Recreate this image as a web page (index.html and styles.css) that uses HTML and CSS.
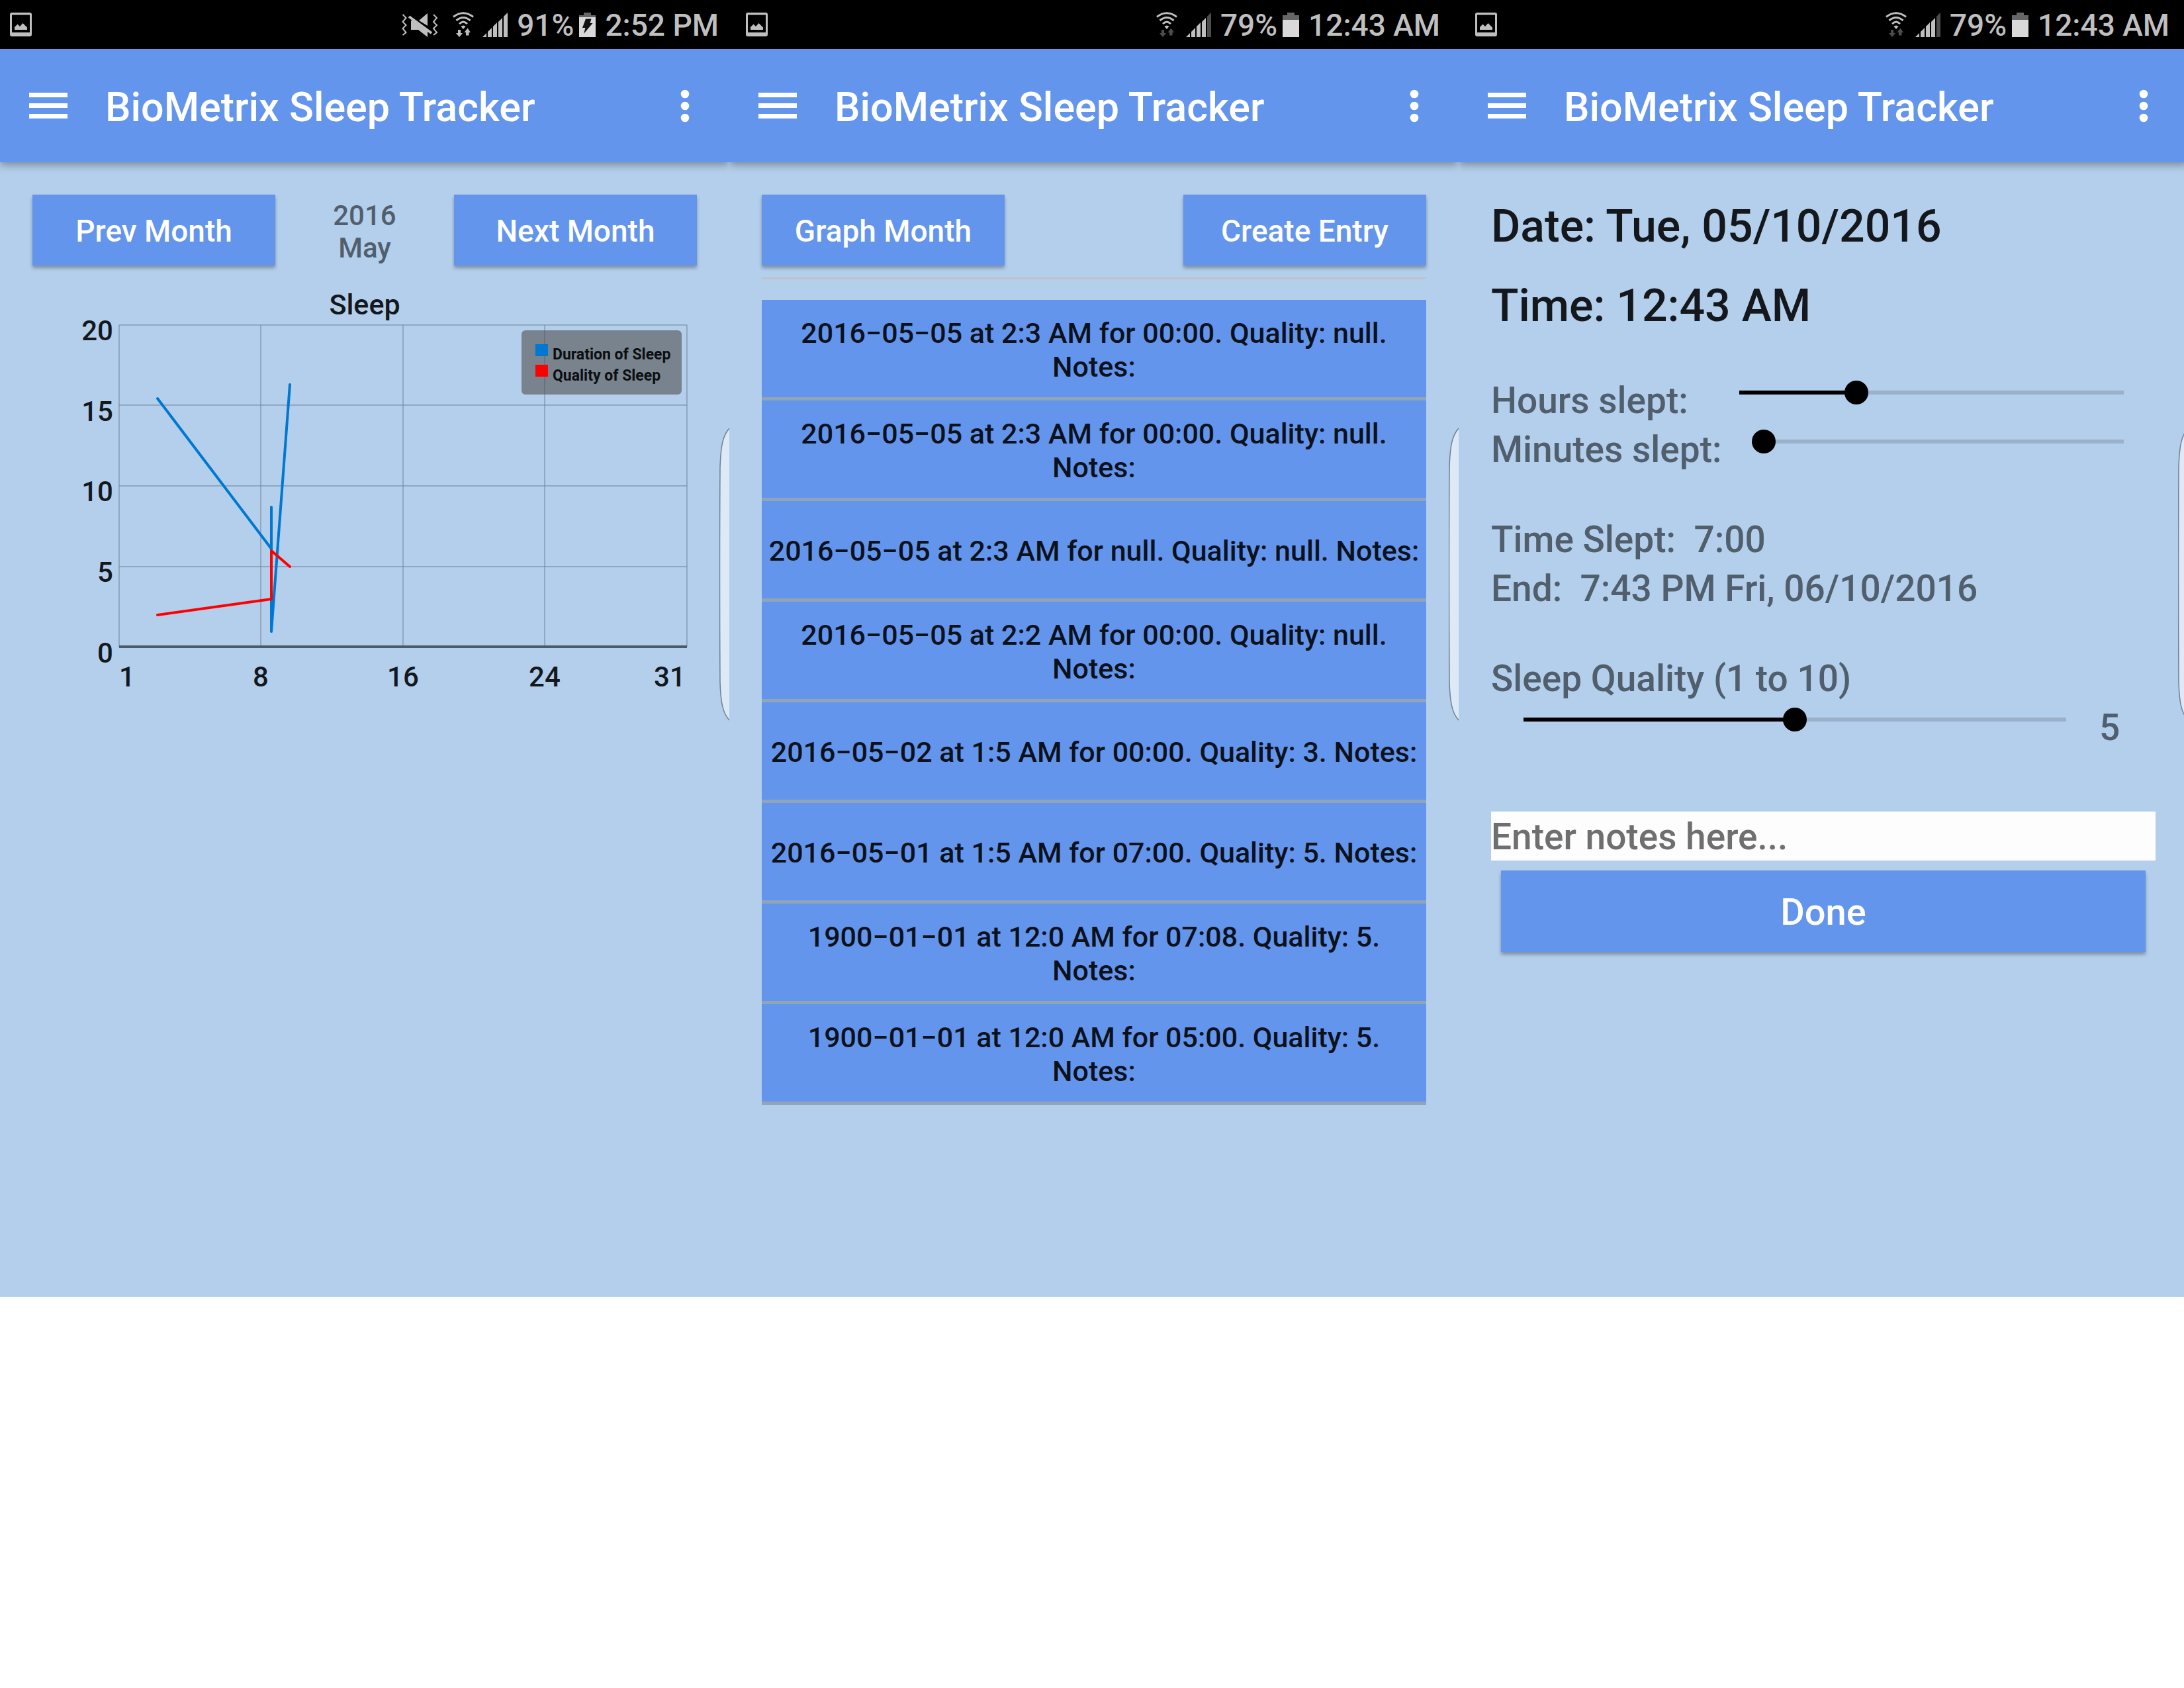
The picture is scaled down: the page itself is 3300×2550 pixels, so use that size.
FILE: index.html
```html
<!DOCTYPE html>
<html lang="en">
<head>
<meta charset="utf-8">
<title>BioMetrix Sleep Tracker</title>
<link rel="stylesheet" href="styles.css">
</head>
<body>
<svg class="sprite" aria-hidden="true">
  <symbol id="photo" viewBox="0 0 33 36">
    <path d="M3 0H30Q33 0 33 3V33Q33 36 30 36H3Q0 36 0 33V3Q0 0 3 0ZM3 3.500V30H30V3.500Z" fill="#bfbfbf" fill-rule="evenodd"/>
    <path d="M7 26V22L11.500 17.500L15 21L19.500 16L26 22.500V26Z" fill="#bfbfbf"/>
  </symbol>
  <symbol id="mute" viewBox="0 0 55 37">
    <g fill="none" stroke="#bfbfbf" stroke-width="2">
      <path d="M1.500 3L6.500 8L1.500 14L6.500 19L1.500 24L6.500 30L1.500 34"/>
      <path d="M48 3L53 8L48 14L53 19L48 24L53 30L48 34"/>
      <path d="M11 6L45 31" stroke-width="4"/>
    </g>
    <path d="M26 12L39 1V20Z M14 12H20L39 27V37L25 26H14Z" fill="#bfbfbf"/>
  </symbol>
  <symbol id="wifi" viewBox="0 0 33 38">
    <g fill="none" stroke="#bfbfbf" stroke-width="3">
      <path d="M1 7.500Q16 -4 31 7.500"/>
      <path d="M5.500 13Q16 4 26.500 13"/>
      <path d="M10 18Q16 12 22 18"/>
    </g>
    <path d="M12.500 22Q16 19 19.500 22L16 26Z" fill="#bfbfbf"/>
    <path d="M8 27H12V32H15L10 38L5 32H8Z M20 35.500H24.500V31H27L22.500 24.500L17.500 31H20Z" fill="currentColor"/>
  </symbol>
  <symbol id="signal" viewBox="0 0 38 37">
    <path d="M0 37L6 31V37Z M8 37V29L14 23V37Z M16 37V21L22 15V37Z M24 37V14L30 8V37Z" fill="#bfbfbf"/>
    <path d="M32 37V6L38 0V37Z" fill="currentColor"/>
  </symbol>
  <symbol id="battery" viewBox="0 0 25 37">
    <path d="M7 0H18V4H25V11H0V4H7Z" fill="#666"/>
    <path d="M0 11H25V37H0Z" fill="#d9d9d9"/>
  </symbol>
  <symbol id="charging" viewBox="0 0 25 37">
    <path d="M7 0H18V4H25V8H0V4H7Z" fill="#666"/>
    <path d="M0 7H25V37H0Z" fill="#d9d9d9"/>
    <path d="M10 9.500H18.500L16.500 16H20.500L7 32L9.500 23H5Z" fill="#111"/>
  </symbol>
  <symbol id="menu" viewBox="0 0 58 39">
    <path d="M0 0H58V7H0Z M0 16H58V23H0Z M0 32H58V39H0Z" fill="#fff"/>
  </symbol>
  <symbol id="more" viewBox="0 0 14 50">
    <g fill="#fff"><circle cx="7" cy="7" r="6.300"/><circle cx="7" cy="25" r="6.300"/><circle cx="7" cy="43" r="6.300"/></g>
  </symbol>
  <symbol id="edge" viewBox="0 0 15 443">
    <path d="M15 1C5 12 2 28 1 60Q0 220 1 385C2 415 5 431 15 442Z" fill="#dde9f7"/>
    <path d="M15 1C5 12 2 28 1 60Q0 220 1 385C2 415 5 431 15 442" fill="none" stroke="#708090" stroke-width="1.500"/>
  </symbol>
</svg>

<main class="screens">
  <section class="screen">
    <div class="status status-wide">
      <svg class="i-photo"><use href="#photo"/></svg>
      <svg class="i-mute"><use href="#mute"/></svg>
      <svg class="i-wifi"><use href="#wifi"/></svg>
      <svg class="i-signal"><use href="#signal"/></svg>
      <span class="percent">91%</span>
      <svg class="i-battery"><use href="#charging"/></svg>
      <span class="clock">2:52 PM</span>
    </div>
    <header class="appbar">
      <button class="icon-btn" aria-label="Menu"><svg class="i-menu"><use href="#menu"/></svg></button>
      <h1>BioMetrix Sleep Tracker</h1>
      <button class="icon-btn" aria-label="More options"><svg class="i-more"><use href="#more"/></svg></button>
    </header>
    <div class="content">
      <div class="toolbar">
        <button class="btn">Prev Month</button>
        <p class="month">2016<br>May</p>
        <button class="btn">Next Month</button>
      </div>
      <svg class="chart" viewBox="0 0 1004 625" role="img" aria-label="Sleep">
        <text class="label title mid" x="502" y="49">Sleep</text>
        <g class="grid">
          <path d="M131 65H989M131 186H989M131 308H989M131 430H989"/>
          <path d="M131 65V551M345 65V551M560 65V551M774 65V551M989 65V551"/>
        </g>
        <path class="axis" d="M131 551H989"/>
        <g class="label end">
          <text x="122" y="88">20</text><text x="122" y="210">15</text><text x="122" y="331">10</text><text x="122" y="453">5</text><text x="122" y="575">0</text>
        </g>
        <g class="label mid">
          <text x="143" y="611">1</text><text x="345" y="611">8</text><text x="560" y="611">16</text><text x="774" y="611">24</text><text x="963" y="611">31</text>
        </g>
        <path class="duration" d="M189 176L361 403V340V528L389 155"/>
        <path class="quality" d="M189 503L361 479V406L389 430"/>
        <rect x="739" y="73" width="242" height="97" rx="6" fill="#505050" fill-opacity=".6"/>
        <rect x="760" y="94" width="19" height="18" fill="#0077d0"/>
        <rect x="760" y="125" width="19" height="18" fill="#f00"/>
        <text class="legend" x="786" y="117">Duration of Sleep</text>
        <text class="legend" x="786" y="149">Quality of Sleep</text>
      </svg>
    </div>
    <svg class="edge"><use href="#edge"/></svg>
  </section>

  <section class="screen">
    <div class="status status-inset">
      <svg class="i-photo"><use href="#photo"/></svg>
      <svg class="i-wifi dim"><use href="#wifi"/></svg>
      <svg class="i-signal dim"><use href="#signal"/></svg>
      <span class="percent">79%</span>
      <svg class="i-battery"><use href="#battery"/></svg>
      <span class="clock">12:43 AM</span>
    </div>
    <header class="appbar">
      <button class="icon-btn" aria-label="Menu"><svg class="i-menu"><use href="#menu"/></svg></button>
      <h1>BioMetrix Sleep Tracker</h1>
      <button class="icon-btn" aria-label="More options"><svg class="i-more"><use href="#more"/></svg></button>
    </header>
    <div class="content">
      <div class="toolbar">
        <button class="btn">Graph Month</button>
        <button class="btn">Create Entry</button>
      </div>
      <hr class="rule">
      <ul class="entries">
        <li><button class="entry">2016−05−05 at 2:3 AM for 00:00. Quality: null. Notes:</button></li>
        <li><button class="entry">2016−05−05 at 2:3 AM for 00:00. Quality: null. Notes:</button></li>
        <li><button class="entry">2016−05−05 at 2:3 AM for null. Quality: null. Notes:</button></li>
        <li><button class="entry">2016−05−05 at 2:2 AM for 00:00. Quality: null. Notes:</button></li>
        <li><button class="entry">2016−05−02 at 1:5 AM for 00:00. Quality: 3. Notes:</button></li>
        <li><button class="entry">2016−05−01 at 1:5 AM for 07:00. Quality: 5. Notes:</button></li>
        <li><button class="entry">1900−01−01 at 12:0 AM for 07:08. Quality: 5. Notes:</button></li>
        <li><button class="entry">1900−01−01 at 12:0 AM for 05:00. Quality: 5. Notes:</button></li>
      </ul>
    </div>
    <svg class="edge"><use href="#edge"/></svg>
  </section>

  <section class="screen">
    <div class="status status-inset">
      <svg class="i-photo"><use href="#photo"/></svg>
      <svg class="i-wifi dim"><use href="#wifi"/></svg>
      <svg class="i-signal dim"><use href="#signal"/></svg>
      <span class="percent">79%</span>
      <svg class="i-battery"><use href="#battery"/></svg>
      <span class="clock">12:43 AM</span>
    </div>
    <header class="appbar">
      <button class="icon-btn" aria-label="Menu"><svg class="i-menu"><use href="#menu"/></svg></button>
      <h1>BioMetrix Sleep Tracker</h1>
      <button class="icon-btn" aria-label="More options"><svg class="i-more"><use href="#more"/></svg></button>
    </header>
    <form class="content form">
      <div class="when">
        <p>Date: Tue, 05/10/2016</p>
        <p>Time: 12:43 AM</p>
      </div>
      <div>
        <div class="field field-hours">
          <label for="hours">Hours slept:</label>
          <input class="slider" id="hours" type="range" min="0" max="23" value="7">
        </div>
        <div class="field field-minutes">
          <label for="minutes">Minutes slept:</label>
          <input class="slider" id="minutes" type="range" min="0" max="59" value="0">
        </div>
      </div>
      <div class="summary">
        <p>Time Slept:&nbsp; 7:00</p>
        <p>End:&nbsp; 7:43 PM Fri, 06/10/2016</p>
      </div>
      <div>
        <label for="quality">Sleep Quality (1 to 10)</label>
        <div class="field field-quality">
          <input class="slider" id="quality" type="range" min="0" max="10" value="5">
          <output for="quality">5</output>
        </div>
      </div>
      <div class="finish">
        <input class="notes" type="text" aria-label="Notes" placeholder="Enter notes here...">
        <button class="btn done" type="button">Done</button>
      </div>
    </form>
    <svg class="edge"><use href="#edge"/></svg>
  </section>
</main>
</body>
</html>
```
FILE: styles.css
```css
* { box-sizing: border-box; }
body {
  margin: 0;
  background: #fff;
  font-family: Roboto, sans-serif;
  font-weight: 500;
  color: #14181c;
}
p, h1, ul { margin: 0; padding: 0; }
button { border: 0; padding: 0; font: inherit; cursor: pointer; }
svg { display: block; flex: none; }
.sprite { position: absolute; width: 0; height: 0; }

/* three phone screens side by side, the last one runs off the edge */
.screens {
  display: grid;
  grid-template-columns: repeat(3, calc((100% + 6px) / 3));
  overflow: hidden;
}
.screen {
  position: relative;
  overflow: hidden;
  aspect-ratio: 9 / 16;
  background: #b3cfec;
}

.status {
  display: flex;
  align-items: center;
  height: 74px;
  padding: 0 28px 0 15px;
  background: #000;
  color: #bfbfbf;
  font-size: 46px;
  line-height: 74px;
}
.status-wide { padding-right: 16px; }
.status-inset { padding-left: 25px; }
.percent, .clock { padding-top: 2px; }
.i-photo { width: 33px; height: 36px; margin-right: auto; }
.i-mute { width: 55px; height: 37px; margin-right: 22px; }
.i-wifi { width: 33px; height: 38px; margin-right: 12px; }
.i-signal { width: 38px; height: 37px; margin-right: 14px; }
.i-battery { width: 25px; height: 37px; margin: 0 14px 0 8px; }
.dim { color: #4d4d4d; }

.appbar {
  display: flex;
  align-items: center;
  height: 171px;
  padding: 0 60px 0 44px;
  background: #6495ed;
  color: #fff;
  box-shadow: 0 4px 12px rgba(0, 0, 0, .35);
}
.appbar h1 { flex: 1; margin-left: 57px; padding-top: 4px; font-size: 61px; font-weight: 500; line-height: 72px; }
.icon-btn { background: none; }
.i-menu { width: 58px; height: 39px; }
.i-more { width: 14px; height: 50px; }

.content { padding: 49px; }
.toolbar { display: flex; justify-content: space-between; align-items: center; }
.btn {
  width: 367px;
  height: 107px;
  padding-top: 2px;
  background: #6495ed;
  color: #fff;
  font-size: 46px;
  box-shadow: 0 4px 5px rgba(0, 0, 0, .3);
}
.month { padding-top: 4px; color: #515f6d; font-size: 42px; line-height: 49px; text-align: center; }

.chart { width: 100%; margin-top: 25px; }
.label { font-size: 42px; fill: #14181c; }
.title { font-size: 43px; }
.mid { text-anchor: middle; }
.end { text-anchor: end; }
.legend { font-size: 23px; font-weight: 700; fill: #0c0e10; }
.grid { fill: none; stroke: #6f8193; stroke-width: 1; }
.axis { stroke: #4c5b69; stroke-width: 4; }
.duration, .quality { fill: none; stroke-width: 4; stroke-linejoin: round; stroke-linecap: round; }
.duration { stroke: #0077d0; }
.quality { stroke: #f00; }

.rule { height: 3px; margin: 18px 0 31px; border: 0; background: #bfc3c6; }
.entries { display: grid; gap: 5px; list-style: none; }
.entry {
  display: block;
  width: 100%;
  height: 147px;
  padding: 4px 8px 0;
  background: #6495ed;
  color: #0c121c;
  font-size: 43px;
  line-height: 51px;
  text-align: center;
  box-shadow: 0 5px 0 #91a4b8;
}

.form {
  display: grid;
  gap: 62px;
  padding-top: 57px;
  color: #515f6d;
  font-size: 55px;
  line-height: 74px;
}
.when { display: grid; gap: 40px; padding-bottom: 4px; color: #14181c; font-size: 68px; line-height: 80px; }
.field { display: grid; }
.field-hours { grid-template-columns: 357px 1fr; margin-right: 30px; }
.field-minutes { grid-template-columns: 394px 1fr; margin-right: 30px; }
.field-quality { grid-template-columns: 1fr 117px; padding-left: 31px; }
.field-quality output { padding-left: 32px; }
.slider {
  appearance: none;
  width: 100%;
  height: 50px;
  margin: 0;
  background:
    linear-gradient(#000, #000) 18px 50% / calc((100% - 36px) * var(--fill)) 6px no-repeat,
    linear-gradient(#9bb1c9, #9bb1c9) 18px 50% / calc(100% - 36px) 6px no-repeat;
}
.slider::-webkit-slider-runnable-track { height: 36px; }
.slider::-webkit-slider-thumb {
  appearance: none;
  width: 36px;
  height: 36px;
  border-radius: 50%;
  background: #000;
}
#hours { --fill: .304; }
#minutes { --fill: 0; }
#quality { --fill: .5; }

.finish { display: grid; gap: 15px; padding-top: 28px; }
.notes {
  width: 100%;
  height: 74px;
  padding: 2px 0 0;
  border: 0;
  background: #fdfdfd;
  color: #6f6f6f;
  font: inherit;
}
.notes::placeholder { color: #6f6f6f; }
.done { width: auto; height: 123px; margin: 0 15px; font-size: 56px; }

/* pull-out handle on the right side of each screen */
.edge { position: absolute; right: 0; top: 646px; width: 15px; height: 443px; }
```
